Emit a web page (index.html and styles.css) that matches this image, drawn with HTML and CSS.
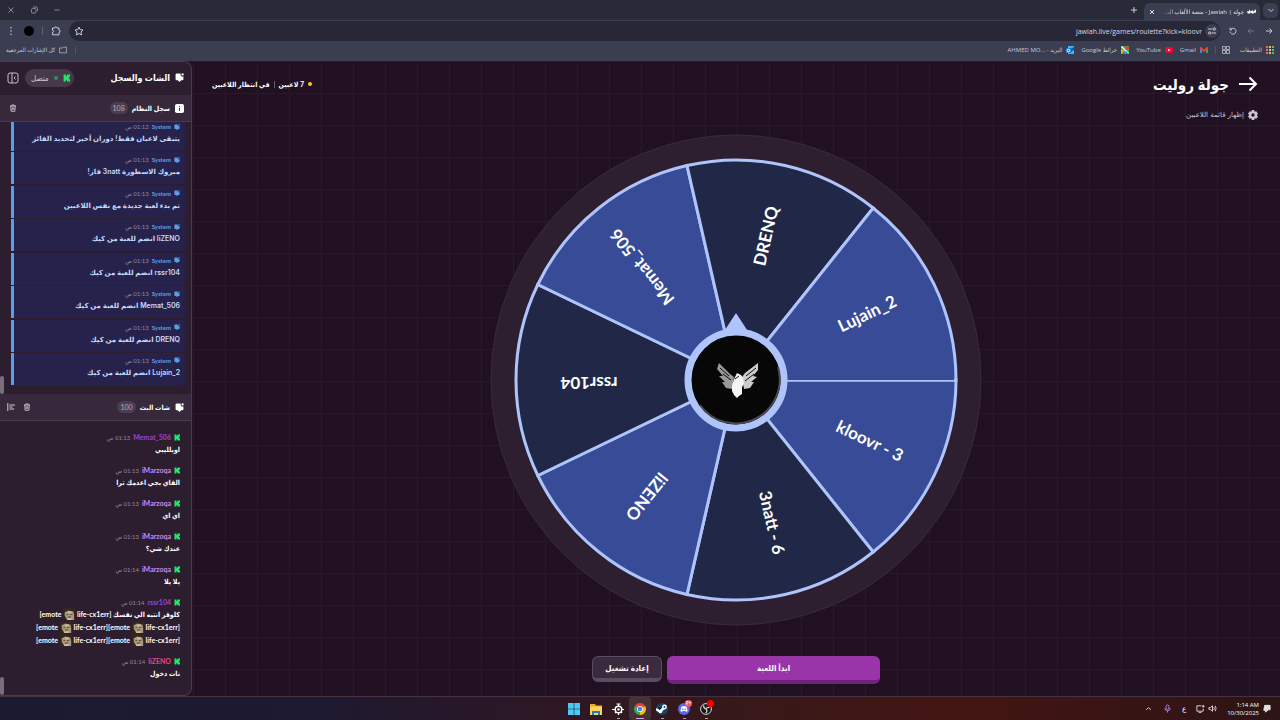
FILE: index.html
```html
<!DOCTYPE html>
<html lang="ar" dir="rtl">
<head>
  <meta charset="UTF-8">
  <meta name="viewport" content="width=device-width, initial-scale=1">
  <title>جولة | Jawlah - منصة الألعاب</title>
  <link rel="stylesheet" href="styles.css">
</head>
<body>
  <!-- shared icons -->
  <svg class="sprite" aria-hidden="true">
    <symbol id="kick" viewBox="0 0 12 12"><path fill="#1fe86a" d="M1 0h4v3h1V2h1V0h5v4h-1v1h-1v2h1v1h1v4H7v-2H6V9H5v3H1z"/></symbol>
    <symbol id="bubble" viewBox="0 0 16 16"><path fill="currentColor" d="M3 1h7v3l2 2h3v5a2 2 0 0 1-2 2h-2l-3 3-3-3H3a2 2 0 0 1-2-2V3a2 2 0 0 1 2-2z"/><circle cx="13.500" cy="2.500" r="2" fill="currentColor"/></symbol>
    <symbol id="trash" viewBox="0 0 16 16"><path fill="none" stroke="currentColor" stroke-width="1.800" d="M2 4h12M5.500 4V2h5v2M3.500 4l.7 10.500h7.600L12.500 4M6.500 6.500v5.500M9.500 6.500v5.500"/></symbol>
    <symbol id="emote" viewBox="0 0 14 14"><rect width="14" height="14" fill="#33251f"/><path fill="#a89678" d="M2 5l4-2 6 1 1 4v6H5L2 9z"/><path fill="#51402f" d="M4 7h2v1H4zM8 7h3v1H8zM6 10h3v1H6z"/><path fill="#d1c2a1" d="M6 4h4v2H6zM5 12h5v2H5z"/></symbol>
  </svg>

  <header class="browser">
    <div class="tabs">
      <button class="tab-list" aria-label="البحث في علامات التبويب"><svg viewBox="0 0 10 10"><path d="M2.500 4L5 6.500 7.500 4"/></svg></button>
      <div class="tab">
        <svg class="favicon" viewBox="0 0 12 8"><path fill="#fff" d="M0 3h3V1h1v2h2V2h2v1h2V1h2v4H9v1H6V5H4v1H1z"/></svg>
        <span class="tab-title">جولة | Jawlah - منصة الألعاب الت</span>
        <button aria-label="إغلاق علامة التبويب"><svg viewBox="0 0 10 10"><path d="M3 3l4 4M7 3L3 7"/></svg></button>
      </div>
      <button class="new-tab" aria-label="علامة تبويب جديدة"><svg viewBox="0 0 10 10"><path d="M5 2v6M2 5h6"/></svg></button>
      <div class="window-buttons">
        <button aria-label="تصغير"><svg viewBox="0 0 10 10"><path d="M2.500 5h5"/></svg></button>
        <button aria-label="استعادة"><svg viewBox="0 0 10 10"><rect x="2.500" y="3.500" width="4.500" height="4.500" rx="1"/><path d="M4 2h3a1.500 1.500 0 0 1 1.500 1.500V6"/></svg></button>
        <button aria-label="إغلاق"><svg viewBox="0 0 10 10"><path d="M2.500 2.500l5 5M7.500 2.500l-5 5"/></svg></button>
      </div>
    </div>

    <div class="toolbar">
      <button aria-label="رجوع"><svg viewBox="0 0 10 10"><path d="M2 5h6M5.500 2.500L8 5 5.500 7.500"/></svg></button>
      <button class="dim" aria-label="تقدم"><svg viewBox="0 0 10 10"><path d="M8 5H2M4.500 2.500L2 5l2.500 2.500"/></svg></button>
      <button aria-label="إعادة تحميل"><svg viewBox="0 0 10 10"><path d="M2.500 3.500A3 3 0 1 1 2 5.500M2 1.800v2h2"/></svg></button>
      <div class="address">
        <button class="site-info" aria-label="معلومات الموقع"><svg viewBox="0 0 10 10"><path d="M1 3h4M5 7h4"/><circle cx="7.200" cy="3" r="1.200"/><circle cx="2.800" cy="7" r="1.200"/></svg></button>
        <input type="text" dir="ltr" aria-label="شريط العناوين" value="jawlah.live/games/roulette?kick=kloovr">
        <button aria-label="إضافة إشارة"><svg viewBox="0 0 10 10"><path d="M5 1l1.200 2.700 2.800.3L7 6l.6 3L5 7.500 2.400 9 3 6 1 4l2.800-.3z"/></svg></button>
      </div>
      <button class="extensions" aria-label="الإضافات"><svg viewBox="0 0 10 10"><path d="M1.500 2h2.200a1.100 1.100 0 0 1 2.200 0H8v2.200a1.100 1.100 0 0 1 0 2.200V8.800H1.500V6.500a1.100 1.100 0 0 0 0-2.200z"/></svg></button>
      <span class="divider"></span>
      <button class="profile" aria-label="الملف الشخصي"></button>
      <button aria-label="القائمة"><svg viewBox="0 0 10 10"><g class="solid"><circle cx="5" cy="1.800" r=".8"/><circle cx="5" cy="5" r=".8"/><circle cx="5" cy="8.200" r=".8"/></g></svg></button>
    </div>

    <nav class="bookmarks">
      <a href="#"><svg viewBox="0 0 8 8"><path fill="#ea6a5b" d="M0 0h2v8H0z"/><path fill="#e8c353" d="M3 0h2v8H3z"/><path fill="#56b97b" d="M6 0h2v8H6z"/><path fill="#3b3d50" d="M0 2h8v1H0zM0 5h8v1H0z"/></svg>التطبيقات</a>
      <a href="#" class="groups" aria-label="المجموعات"><svg viewBox="0 0 8 8"><path fill="none" stroke="#a4a5b5" d="M.5.5h3v3h-3zM4.500.5h3v3h-3zM.5 4.500h3v3h-3zM4.500 4.500h3v3h-3z"/></svg></a>
      <a href="#"><svg viewBox="0 0 8 8"><path fill="#4285f4" d="M0 2h2v5H0z"/><path fill="#34a853" d="M6 2h2v5H6z"/><path fill="#ea4335" d="M0 1h1l3 2.500L7 1h1v2L4 6 0 3z"/></svg>Gmail</a>
      <a href="#"><svg viewBox="0 0 8 8"><rect y="1" width="8" height="6" rx="2" fill="#f03"/><path fill="#fff" d="M3.200 2.700L5.500 4 3.200 5.300z"/></svg>YouTube</a>
      <a href="#"><svg viewBox="0 0 8 8"><path fill="#34a853" d="M0 0h8v8H0z"/><path fill="#fff" d="M0 1l1-1 7 7-1 1z"/><path fill="#4285f4" d="M2 8l3-3 3 3z"/><path fill="#fbbc04" d="M0 3l3 2-3 3z"/><circle cx="6" cy="2" r="2" fill="#ea4335"/></svg>خرائط Google</a>
      <a href="#"><svg viewBox="0 0 8 8"><path fill="#42b7ef" d="M2 0h6v8H2z"/><path fill="#0a63b8" d="M2 4l6-3v3L5 6z"/><path fill="#1080d0" d="M0 2h5v5H0z"/><circle cx="2.500" cy="4.500" r="1.300" fill="none" stroke="#fff"/></svg><span>البريد - <bdi dir="ltr">AHMED MO...</bdi></span></a>
      <a href="#" class="all-bookmarks"><svg viewBox="0 0 10 8"><path fill="none" stroke="#b4b5c4" d="M.5 7.500v-6h4l1-1h4v7z"/></svg>كل الإشارات المرجعية</a>
    </nav>
  </header>

  <main class="page">
    <section class="stage">
      <div class="stage-top">
        <div class="round">
          <h1><svg viewBox="0 0 20 16"><path d="M1 8h17M11.500 1.500L18 8l-6.500 6.500"/></svg>جولة روليت</h1>
          <button class="show-players"><svg viewBox="0 0 12 12"><path fill="currentColor" fill-rule="evenodd" d="M4.500 0h3l.5 2 2-.5L12 4.500 10.500 6 12 7.500l-2 3L8 10l-.5 2h-3L4 10l-2 .5-2-3L1.500 6 0 4.500l2-3L4 2zM6 4a2 2 0 1 0 0 4 2 2 0 0 0 0-4z"/></svg>إظهار قائمة اللاعبين</button>
        </div>
        <p class="status"><span class="dot"></span>7 لاعبين<span class="bar"></span>في انتظار اللاعبين</p>
      </div>

      <svg class="wheel" viewBox="-246 -246 492 492" role="img" aria-label="عجلة الروليت">
        <circle class="rim" r="245"/>
        <g class="slices">
          <path class="blue" d="M0 0L220 0A220 220 0 0 1 137.200 172z"/>
          <path class="navy" d="M0 0L137.200 172A220 220 0 0 1 -49 214.500z"/>
          <path class="blue" d="M0 0L-49 214.500A220 220 0 0 1 -198.200 95.500z"/>
          <path class="navy" d="M0 0L-198.200 95.500A220 220 0 0 1 -198.200 -95.500z"/>
          <path class="blue" d="M0 0L-198.200 -95.500A220 220 0 0 1 -49 -214.500z"/>
          <path class="navy" d="M0 0L-49 -214.500A220 220 0 0 1 137.200 -172z"/>
          <path class="blue" d="M0 0L137.200 -172A220 220 0 0 1 220 0z"/>
        </g>
        <path class="blue" d="M40 -2H218V0H40z"/>
        <g class="names">
          <text x="147" y="3" transform="rotate(25.700)">kloovr - 3</text>
          <text x="147" y="3" transform="rotate(77.100)">3natt - 6</text>
          <text x="147" y="3" transform="rotate(128.600)">liZENO</text>
          <text x="147" y="3" transform="rotate(180)">rssr104</text>
          <text x="147" y="3" transform="rotate(231.400)">Memat_506</text>
          <text x="147" y="3" transform="rotate(282.900)">DRENQ</text>
          <text x="147" y="3" transform="rotate(334.300)">Lujain_2</text>
        </g>
        <path class="pointer" d="M0 -67L13 -47H-13z"/>
        <circle class="hub" r="48"/>
        <path d="M-36 25A44 44 0 0 0 42 -13" fill="none" stroke="#4b4a4c" stroke-width="2"/>
        <g class="eagle">
          <path fill="#999" d="M-17 -17L-11 -11 -6 -6 -2 -3 -4 9 -10 8 -14 2 -11 2 -17 -4 -13 -4 -19 -11z"/>
          <path fill="#ccc" d="M22 -17L9 -7 6 -3 8 9 14 8 18 2 15 2 21 -3 17 -4 22 -10z"/>
          <path fill="#f4f4f4" d="M1 -7L5 -5 7 -2 8 4 6 7 6 14 3 16 1 18 -2 15 -4 11 -4 5 -3 2 -1 -3z"/>
          <path fill="none" stroke="#0b0b0b" d="M-16 -12L-7 -4M-13 -6L-5 0M20 -12L10 -4M18 -6L9 1M-1 -1L3 -4"/>
        </g>
      </svg>

      <div class="actions">
        <button class="start">ابدأ اللعبة</button>
        <button class="restart">إعادة تشغيل</button>
      </div>
    </section>

    <aside class="sidebar">
      <div class="side-head">
        <h2><svg><use href="#bubble"/></svg>الشات والسجل</h2>
        <span class="connected"><svg><use href="#kick"/></svg><i></i>متصل</span>
        <button class="collapse" aria-label="طي اللوحة"><svg viewBox="0 0 12 12"><rect x="1" y="1" width="10" height="10" rx="2"/><path d="M5 1v10M8.500 4.500L7 6l1.500 1.500"/></svg></button>
      </div>

      <div class="section-head">
        <h3><svg viewBox="0 0 10 10"><rect width="10" height="10" rx="2" fill="#fff"/><path d="M5 2.500v1M5 4.500v3" stroke="#38283b" stroke-width="1.200"/></svg>سجل النظام</h3>
        <span class="count">108</span>
        <button class="clear" aria-label="مسح السجل"><svg><use href="#trash"/></svg></button>
      </div>
      <ul class="log">
        <li><div class="meta"><svg><use href="#bubble"/></svg><b>System</b><time>01:12 ص</time></div><p>يتبقى لاعبان فقط! دوران أخير لتحديد الفائز</p></li>
        <li><div class="meta"><svg><use href="#bubble"/></svg><b>System</b><time>01:13 ص</time></div><p>مبروك الاسطورة 3natt فاز!</p></li>
        <li><div class="meta"><svg><use href="#bubble"/></svg><b>System</b><time>01:13 ص</time></div><p>تم بدء لعبة جديدة مع نفس اللاعبين</p></li>
        <li><div class="meta"><svg><use href="#bubble"/></svg><b>System</b><time>01:13 ص</time></div><p>liZENO انضم للعبة من كيك</p></li>
        <li><div class="meta"><svg><use href="#bubble"/></svg><b>System</b><time>01:13 ص</time></div><p>rssr104 انضم للعبة من كيك</p></li>
        <li><div class="meta"><svg><use href="#bubble"/></svg><b>System</b><time>01:13 ص</time></div><p>Memat_506 انضم للعبة من كيك</p></li>
        <li><div class="meta"><svg><use href="#bubble"/></svg><b>System</b><time>01:13 ص</time></div><p>DRENQ انضم للعبة من كيك</p></li>
        <li><div class="meta"><svg><use href="#bubble"/></svg><b>System</b><time>01:13 ص</time></div><p>Lujain_2 انضم للعبة من كيك</p></li>
      </ul>

      <div class="section-head chat-head">
        <h3><svg><use href="#bubble"/></svg>شات البث</h3>
        <span class="count">100</span>
        <button class="clear" aria-label="مسح الشات"><svg><use href="#trash"/></svg></button>
        <button aria-label="محاذاة"><svg viewBox="0 0 10 10"><path fill="none" stroke="currentColor" stroke-width="1.300" d="M1 0v10M3 2.500h7M3 5h4M3 7.500h6"/></svg></button>
      </div>
      <ul class="chat">
        <li><div class="meta"><svg><use href="#kick"/></svg><b class="violet">Memat_506</b><time>01:13 ص</time></div><p>اويلليبي</p></li>
        <li><div class="meta"><svg><use href="#kick"/></svg><b class="lilac">iMarzoqa</b><time>01:13 ص</time></div><p>الفاي بجي اعدمك ترا</p></li>
        <li><div class="meta"><svg><use href="#kick"/></svg><b class="lilac">iMarzoqa</b><time>01:13 ص</time></div><p>اي اي</p></li>
        <li><div class="meta"><svg><use href="#kick"/></svg><b class="lilac">iMarzoqa</b><time>01:13 ص</time></div><p>عندك شي؟</p></li>
        <li><div class="meta"><svg><use href="#kick"/></svg><b class="lilac">iMarzoqa</b><time>01:14 ص</time></div><p>يلا يلا</p></li>
        <li><div class="meta"><svg><use href="#kick"/></svg><b class="violet">rssr104</b><time>01:14 ص</time></div>
          <p>كلوفر انتبه الي نفسك <bdi dir="ltr">[emote <svg><use href="#emote"/></svg> life-cx1err]</bdi><br><bdi dir="ltr">[emote <svg><use href="#emote"/></svg> life-cx1err][emote <svg><use href="#emote"/></svg> life-cx1err]</bdi><br><bdi dir="ltr">[emote <svg><use href="#emote"/></svg> life-cx1err][emote <svg><use href="#emote"/></svg> life-cx1err]</bdi></p></li>
        <li><div class="meta"><svg><use href="#kick"/></svg><b class="pink">liZENO</b><time>01:14 ص</time></div><p>نات دخول</p></li>
      </ul>
    </aside>
  </main>

  <footer class="taskbar" dir="ltr">
    <div class="apps">
      <button aria-label="Start"><svg viewBox="0 0 12 12"><path fill="#4cc8f5" d="M0 0h5.700v5.700H0zM6.300 0H12v5.700H6.300zM0 6.300h5.700V12H0zM6.300 6.300H12V12H6.300z"/></svg></button>
      <button aria-label="Files"><svg viewBox="0 0 12 12"><path fill="#e9a92d" d="M0 1h5l1 1.500h6V5H0z"/><path fill="#fbd35c" d="M0 3.500h12V12H0z"/><path fill="#2b78b8" d="M2 8h8v4H8v-2H4v2H2z"/></svg></button>
      <button class="open" aria-label="SteelSeries"><svg viewBox="0 0 12 12"><circle cx="6.500" cy="6.500" r="3.300" fill="none" stroke="#fff" stroke-width="1.500"/><circle cx="6.500" cy="6.500" r="1.200" fill="#fff"/><path stroke="#fff" stroke-width="1.200" d="M4.500 1h4M6.500 1v2M6.500 10v2M0 6.500h3M10 6.500h2M3 10l1-1M10 10L9 9"/></svg></button>
      <button class="open current" aria-label="Chrome"><svg viewBox="0 0 12 12"><path fill="#ea4335" d="M6 6L.8 3A6 6 0 0 1 11.200 3z"/><path fill="#fbbc04" d="M6 6l5.200-3A6 6 0 0 1 6 12z"/><path fill="#34a853" d="M6 6v6A6 6 0 0 1 .8 3z"/><circle cx="6" cy="6" r="3" fill="#fff"/><circle cx="6" cy="6" r="2.300" fill="#4285f4"/></svg></button>
      <button class="open" aria-label="Steam"><svg viewBox="0 0 12 12"><circle cx="6" cy="6" r="6" fill="#14456f"/><path stroke="#fff" stroke-width="2.500" d="M0 6l4 2.500L9 4"/><circle cx="8.500" cy="4" r="2.400" fill="#fff"/><circle cx="4.500" cy="8.500" r="1.800" fill="#fff"/><circle cx="8.500" cy="4" r="1" fill="#14456f"/></svg></button>
      <button class="open" aria-label="Discord"><svg viewBox="0 0 12 12"><circle cx="6" cy="6" r="6" fill="#5865f2"/><path fill="#fff" d="M3.500 3.500Q6 2.600 8.500 3.500L9.700 8 8 9l-.6-1H4.600L4 9 2.300 8z"/><circle cx="4.700" cy="6.300" r=".8" fill="#5865f2"/><circle cx="7.300" cy="6.300" r=".8" fill="#5865f2"/></svg><span class="badge">9+</span></button>
      <button class="open" aria-label="OBS"><svg viewBox="0 0 12 12"><circle cx="6" cy="6" r="5.400" fill="#17171a" stroke="#d4d4d4"/><path fill="none" stroke="#d4d4d4" stroke-width="1.300" d="M3.500 2.500Q3.500 5 6 6M9.500 4.500Q7 4 6 6M5.500 10Q8 8.500 6 6"/></svg><span class="badge rec"></span></button>
    </div>
    <div class="tray">
      <button aria-label="Hidden icons"><svg viewBox="0 0 10 10"><path d="M2.500 6.500L5 4l2.500 2.500"/></svg></button>
      <svg class="mic" viewBox="0 0 10 10"><rect x="3.500" y="1" width="3" height="5" rx="1.500"/><path d="M2 4.500a3 3 0 0 0 6 0M5 7.500v2"/></svg>
      <span class="lang">ع</span>
      <span class="net"><svg viewBox="0 0 10 10"><path d="M6 2H1v6h7V5M3 9.500h3M8 1v3M6.500 2.500h3"/></svg><svg viewBox="0 0 10 10"><path d="M1 4h1.500L5 2v6L2.500 6H1zM6.500 3.500q1 1.500 0 3M8 2q2 3 0 6"/></svg></span>
      <span class="clock"><time>1:14 AM<br>10/30/2025</time>
      <svg viewBox="0 0 10 10"><path fill="#e8e0e0" d="M3 1.500h6v5H7L4 9V7H2z"/></svg></span>
    </div>
  </footer>
</body>
</html>
```
FILE: styles.css
```css
* { box-sizing: border-box; margin: 0; padding: 0; }
body { display: flex; flex-direction: column; height: 100vh; overflow: hidden; background: #201022; color: #fff; font-family: Lato, "DejaVu Sans Condensed", "DejaVu Sans", sans-serif; font-size: 8px; }
button { background: none; border: none; color: inherit; font: inherit; cursor: pointer; }
a { color: inherit; text-decoration: none; }
ul { list-style: none; }
svg { flex-shrink: 0; }
.sprite { display: none; }

/* browser */
.browser { background: #3b3d50; color: #c9cad8; font-family: "Open Sans", "DejaVu Sans Condensed", "DejaVu Sans", sans-serif; font-size: 6px; }
.browser button { display: flex; align-items: center; justify-content: center; flex-shrink: 0; width: 18px; height: 18px; }
.browser button svg { width: 10px; height: 10px; fill: none; stroke: currentColor; }
.browser .solid { fill: currentColor; stroke: none; }
.tabs { display: flex; align-items: center; height: 20px; padding: 0 2px; background: #292a37; }
.tabs .tab-list { width: 15px; height: 15px; border-radius: 5px; background: #3b3d50; }
.tab { display: flex; align-items: center; align-self: flex-end; gap: 3px; width: 116px; height: 17px; margin-right: 3px; padding: 0 4px 0 0; border-radius: 6px 6px 0 0; background: #3b3d50; color: #e4e4ee; }
.tab button { width: 15px; }
.favicon { width: 9px; height: 6px; }
.tab-title { flex: 1; white-space: nowrap; mask-image: linear-gradient(to right, transparent, #000 14px); }
.new-tab { margin-right: 1px; }
.window-buttons { display: flex; gap: 5px; margin-right: auto; color: #85869a; }
.toolbar { display: flex; align-items: center; height: 22px; padding: 0 2px; }
.dim { opacity: .4; }
.address { display: flex; flex: 1; align-items: center; height: 20px; margin: 0 4px; padding: 0 1px; border-radius: 10px; background: #272737; }
.address input { flex: 1; border: none; outline: none; background: none; color: #d8d8e6; font: inherit; font-size: 7px; text-align: right; }
.browser .site-info { width: 14px; height: 14px; margin-left: 3px; border-radius: 7px; background: #3b3d50; }
.divider { width: 1px; height: 8px; margin: 0 4px; background: #59647c; }
.browser .profile { width: 10px; height: 10px; margin: 0 4px; border-radius: 5px; background: #000; }
.bookmarks { display: flex; align-items: center; gap: 7px; height: 19px; padding: 0 6px 3px; }
.bookmarks a { display: flex; align-items: center; gap: 4px; white-space: nowrap; }
.bookmarks svg { width: 8px; height: 8px; }
.bookmarks .groups { margin-right: 3px; padding-left: 6px; border-left: 1px solid #505267; }
.bookmarks .all-bookmarks { margin-right: auto; padding-right: 8px; border-right: 1px solid #505267; }

/* game */
.page { display: flex; flex: 1; min-height: 0; background: linear-gradient(#2b1830 1px, transparent 1px) 0 0 / 32px 32px, linear-gradient(90deg, #2b1830 1px, transparent 1px) 1px 0 / 32px 32px; }
.stage { display: flex; flex: 1; flex-direction: column; align-items: center; min-width: 0; padding: 12px 20px; }
.stage-top { display: flex; justify-content: space-between; width: 100%; height: 61px; }
.round { padding-right: 2px; }
h1 { display: flex; align-items: center; gap: 9px; height: 22px; font-size: 15px; }
h1 svg { width: 20px; height: 16px; fill: none; stroke: #fff; stroke-width: 2; }
.show-players { display: flex; align-items: center; gap: 4px; height: 12px; margin-top: 14px; color: #cfc4d2; font-family: "DejaVu Sans", sans-serif; font-size: 7px; }
.show-players svg { width: 10px; height: 10px; }
.status { display: flex; align-items: center; gap: 4px; height: 22px; font-size: 7px; font-weight: 700; }
.status .dot { width: 4px; height: 4px; border-radius: 2px; background: #f8c91c; }
.status .bar { width: 1px; height: 7px; background: #665669; }
.wheel { width: 492px; height: 492px; direction: ltr; }
.rim { fill: #2d1e30; stroke: #3a2a3e; }
.slices { stroke: #afc4fa; stroke-width: 3; }
.blue { fill: #374b97; }
.navy { fill: #212847; }
.names { fill: #fff; font-family: Lato, sans-serif; font-size: 17px; font-weight: 700; text-anchor: middle; }
.pointer { fill: #afc4fa; }
.hub { fill: #070708; stroke: #afc4fa; stroke-width: 7; }
.actions { display: flex; gap: 5px; margin-top: 30px; }
.actions button { height: 28px; border-radius: 6px; font-size: 8px; font-weight: 700; }
.actions .start { width: 213px; border-bottom: 4px solid #6f237f; background: #9935a9; }
.actions .restart { width: 70px; height: 26px; border: 1px solid #5c4b61; border-bottom-width: 4px; background: #3b2b3f; }

/* sidebar */
.sidebar { display: flex; flex-direction: column; width: 192px; border: 1px solid #4a3950; border-left: none; border-radius: 0 8px 8px 0; background: #2c1d2f; overflow: hidden; }
.side-head, .section-head { display: flex; align-items: center; flex-shrink: 0; padding: 0 7px; }
.side-head { height: 33px; padding-bottom: 2px; }
h2, h3 { display: flex; align-items: center; gap: 5px; }
h2 { font-size: 9px; }
h3 { font-size: 7px; }
h2 svg, h3 svg { width: 9px; height: 9px; }
.connected { display: flex; align-items: center; gap: 5px; height: 18px; margin-right: auto; padding: 0 4px 0 6px; border-radius: 9px; background: #463a4a; color: #cfc6d2; }
.connected svg { width: 7px; height: 8px; }
.connected i { width: 4px; height: 4px; border-radius: 2px; background: #398a62; }
.collapse { margin-right: 6px; }
.collapse svg { display: block; width: 12px; height: 12px; fill: none; stroke: #c9bfcc; }
.section-head { position: relative; z-index: 1; height: 27px; border-bottom: 1px solid #4a3950; background: #38283b; }
.count { height: 12px; margin-right: 4px; padding: 0 3px; border-radius: 6px; background: #4b3e50; color: #b6aabb; font-size: 7px; line-height: 12px; }
.section-head button { color: #cfc6d2; }
.section-head button svg { display: block; width: 8px; height: 8px; }
.section-head .clear { margin-right: auto; margin-left: 2px; }
.section-head.chat-head .clear { margin-left: 8px; }
.log, .chat { position: relative; overflow: hidden; }
.log::after, .chat::after { content: ""; position: absolute; bottom: 0; left: 0; width: 4px; height: 18px; border-radius: 2px; background: #7a6d7e; }
.log { display: flex; flex-direction: column; flex-shrink: 0; justify-content: space-between; height: 275px; margin-top: -3px; padding: 0 6px 9px 11px; }
.log li { height: 32px; padding: 1px 5px; border-left: 3px solid #5a9ee8; border-radius: 0 3px 3px 0; background: #27224b; color: #c3dafd; }
.meta { display: flex; align-items: center; gap: 3px; height: 12px; font-size: 7px; }
.meta svg { width: 6px; height: 6px; }
.meta time { color: #94899a; font-size: 6px; }
.log .meta { height: 13px; color: #5a9ee8; }
.log b { font-size: 6px; }
.log p, .chat p { font-size: 7px; font-weight: 700; line-height: 13px; white-space: nowrap; }
.log p { font-family: Inter, "DejaVu Sans", sans-serif; font-weight: 600; line-height: 12px; }
.chat { display: flex; flex: 1; flex-direction: column; gap: 8px; padding: 10px 11px; }
.chat .meta svg { width: 6px; height: 7px; }
.chat p svg { width: 12px; height: 12px; vertical-align: -3px; }
.violet { color: #9445de; }
.lilac { color: #c78bf5; }
.pink { color: #e8437e; }

/* taskbar */
.taskbar { display: grid; grid-template-columns: 1fr auto 1fr; align-items: center; height: 24px; border-top: 1px solid #46333f; background: linear-gradient(90deg, #1b1b30, #1e1a30 25%, #2b1727 40%, #391818 60%, #431512 75%, #2d1416); }
.apps { display: flex; grid-column: 2; }
.apps button { position: relative; display: flex; align-items: center; justify-content: center; width: 22px; height: 23px; }
.apps svg { width: 12px; height: 12px; }
.apps .current { border-radius: 3px; background: #453137; }
.open::after { content: ""; position: absolute; bottom: 1px; left: 10px; width: 3px; height: 1px; background: #b0a5ac; }
.apps .current::after { left: 7px; width: 8px; background: #d9a4cf; }
.badge { position: absolute; top: 3px; right: 3px; width: 7px; height: 7px; border-radius: 4px; background: #ee5866; font-size: 5px; line-height: 7px; }
.rec { background: #f00; }
.tray { display: flex; align-items: center; justify-content: flex-end; gap: 10px; padding-right: 9px; font-family: "Open Sans", "DejaVu Sans", sans-serif; font-size: 7px; }
.tray svg { display: block; width: 9px; height: 9px; fill: none; stroke: #e8e0e0; }
.tray .mic { stroke: #ba83d3; }
.net { display: flex; gap: 3px; }
.clock { display: flex; align-items: center; gap: 3px; }
.clock time { font-size: 6px; line-height: 8px; text-align: right; }
```
